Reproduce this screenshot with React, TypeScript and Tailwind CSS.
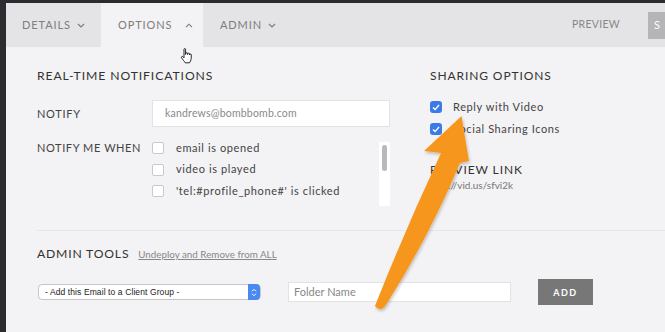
import React from "react";

const font = "font-['Lato','Noto_Sans',sans-serif]";

const Caret = ({ up = false }: { up?: boolean }) => (
  <svg width="8" height="5" viewBox="0 0 8 5" className="ml-[6px]" fill="none">
    <path
      d={up ? "M1 4.2 L4 1.2 L7 4.2" : "M1 1 L4 4 L7 1"}
      stroke="#7a7a7a"
      strokeWidth="1.1"
    />
  </svg>
);

const Box = ({ checked = false }: { checked?: boolean }) =>
  checked ? (
    <span className="flex h-[12px] w-[12px] items-center justify-center rounded-[3px] bg-[#3b7be8]">
      <svg width="8" height="7" viewBox="0 0 8 7" fill="none">
        <path d="M1 3.6 L3.1 5.6 L7 1" stroke="#fff" strokeWidth="1.4" />
      </svg>
    </span>
  ) : (
    <span className="h-[12px] w-[12px] rounded-[2px] border border-[#c9c9c9] bg-white" />
  );

const notifyOptions = [
  "email is opened",
  "video is played",
  "'tel:#profile_phone#' is clicked",
];

export default function App() {
  return (
    <div className={`relative flex h-[332px] w-[665px] flex-col overflow-hidden bg-[#f3f2f4] ${font}`}>
      <div className="h-[3px] bg-[#2c2c30]" />
      <div className="flex flex-1">
        <div className="w-[6px] bg-[#2c2c30]" />
        <div className="flex flex-1 flex-col">
          {/* tab bar */}
          <div className="flex h-[44px] items-center bg-[#e4e4e6] text-[11px] tracking-[0.9px] text-[#7d7d7d]">
            <div className="flex h-full w-[95px] items-center pl-[16px]">
              DETAILS
              <Caret />
            </div>
            <div className="flex h-full w-[102px] items-center bg-[#f3f2f4] pl-[17px]">
              OPTIONS
              <span className="ml-[7px]">
                <Caret up />
              </span>
            </div>
            <div className="flex h-full items-center pl-[17px]">
              ADMIN
              <Caret />
            </div>
            <div className="ml-auto mr-[28px] text-[10.5px] tracking-[0.3px] text-[#888]">PREVIEW</div>
            <div className="flex h-[27px] w-[17px] items-center bg-[#b5b5b7] pl-[6px] text-[11px] text-white">
              S
            </div>
          </div>

          {/* options */}
          <div className="flex pl-[31px] pt-[21px]">
            <div className="w-[353px]">
              <div className="text-[12.2px] leading-[16px] tracking-[0.9px] text-[#333]">
                REAL-TIME NOTIFICATIONS
              </div>
              <div className="mt-[16px] flex items-center">
                <div className="w-[115px] pt-[2px] text-[11px] tracking-[0.7px] text-[#444]">NOTIFY</div>
                <div className="flex h-[27px] w-[238px] items-center border border-[#e3e3e3] bg-white pl-[12px] text-[10.5px] tracking-[0.2px] text-[#8a8a8a]">
                  kandrews@bombbomb.com
                </div>
              </div>
              <div className="mt-[15px] flex">
                <div className="mt-[-2px] w-[115px] text-[11px] tracking-[0.6px] text-[#444]">NOTIFY ME WHEN</div>
                <div className="flex h-[64px] w-[238px] justify-between">
                  <div className="flex flex-col gap-[9.5px]">
                    {notifyOptions.map((o) => (
                      <div key={o} className="flex h-[12px] items-center">
                        <Box />
                        <span className="ml-[12px] text-[11px] tracking-[0.6px] text-[#444]">{o}</span>
                      </div>
                    ))}
                  </div>
                  <div className="w-[11px] bg-white px-[3px] pt-[3px]">
                    <div className="h-[26px] w-[5px] rounded-full bg-[#b9b9b9]" />
                  </div>
                </div>
              </div>
            </div>
            <div className="ml-[40px] flex-1">
              <div className="text-[12px] leading-[16px] tracking-[0.9px] text-[#333]">SHARING OPTIONS</div>
              <div className="mt-[17px] flex flex-col gap-[10px]">
                <div className="flex h-[12px] items-center">
                  <Box checked />
                  <span className="ml-[11px] text-[11px] tracking-[0.6px] text-[#444]">Reply with Video</span>
                </div>
                <div className="flex h-[12px] items-center">
                  <Box checked />
                  <span className="ml-[11px] text-[11px] tracking-[0.6px] text-[#444]">Social Sharing Icons</span>
                </div>
              </div>
              <div className="mt-[28px] text-[12px] leading-[14px] tracking-[0.9px] text-[#333]">PREVIEW LINK</div>
              <div className="mt-[1px] text-[10px] leading-[14px] text-[#777]">http://vid.us/sfvi2k</div>
            </div>
          </div>

          <div className="ml-[31px] mt-[24px] h-px bg-[#e6e5e7]" />

          {/* admin tools */}
          <div className="flex items-center pl-[31px] pt-[14px]">
            <div className="text-[12.2px] tracking-[0.8px] text-[#333]">ADMIN TOOLS</div>
            <div className="ml-[9px] text-[9.8px] text-[#888] underline">Undeploy and Remove from ALL</div>
          </div>
          <div className="flex items-center pl-[32px] pt-[16px]">
            <div className="flex h-[16px] w-[223px] items-center rounded-[4px] border border-[#c6c6c6] bg-white">
              <span className="flex-1 pl-[6px] text-[8.5px] tracking-[0.1px] text-[#222] font-['Liberation_Sans',sans-serif]">
                - Add this Email to a Client Group -
              </span>
              <span className="flex h-[16px] w-[12px] flex-col items-center justify-center rounded-r-[4px] bg-[#4a8af0]">
                <svg width="6" height="9" viewBox="0 0 6 9" fill="none">
                  <path d="M1 3.3 L3 1.3 L5 3.3 M1 5.7 L3 7.7 L5 5.7" stroke="#fff" strokeWidth="1" />
                </svg>
              </span>
            </div>
            <div className="ml-[27px] flex h-[20px] w-[223px] items-center border border-[#e3e3e3] bg-white pl-[5px] text-[11px] text-[#888]">
              Folder Name
            </div>
            <div className="ml-[27px] flex h-[26px] w-[55px] items-center justify-center bg-[#777] text-[9px] font-bold tracking-[1.5px] text-white">
              ADD
            </div>
          </div>
        </div>
      </div>

      {/* cursor */}
      <svg className="pointer-events-none absolute left-[180px] top-[48px]" width="14" height="16" viewBox="0 0 14 16">
        <path
          d="M4 1.2 C4 0.4 5.6 0.4 5.6 1.2 L5.6 6.5 L5.8 5.2 C6 4.5 7.4 4.5 7.5 5.3 L7.6 6.5 L7.8 5.6 C8 5 9.4 5 9.5 5.8 L9.6 7 L9.8 6.4 C10 5.8 11.3 5.9 11.3 6.7 L11.2 10.5 C11 12.5 10 14 9.5 14.8 L5.2 14.8 C4.5 13.6 2.7 11.4 1.6 9.8 C1 9 2 8 2.8 8.6 L4 9.8 Z"
          fill="#fff"
          stroke="#111"
          strokeWidth="0.9"
        />
      </svg>

      {/* arrow overlay */}
      <svg className="pointer-events-none absolute left-0 top-0" width="665" height="332" viewBox="0 0 665 332">
        <defs>
          <filter id="sh" x="-20%" y="-20%" width="140%" height="140%">
            <feDropShadow dx="1" dy="2" stdDeviation="1.5" floodColor="#000" floodOpacity="0.22" />
          </filter>
        </defs>
        <path
          d="M461.5 116 L469 161 L460 163 Q430 235 386 305 Q380 313 375 306 Q405 230 441 153 L424 151 Z"
          fill="#f7961f"
          filter="url(#sh)"
        />
      </svg>
    </div>
  );
}
